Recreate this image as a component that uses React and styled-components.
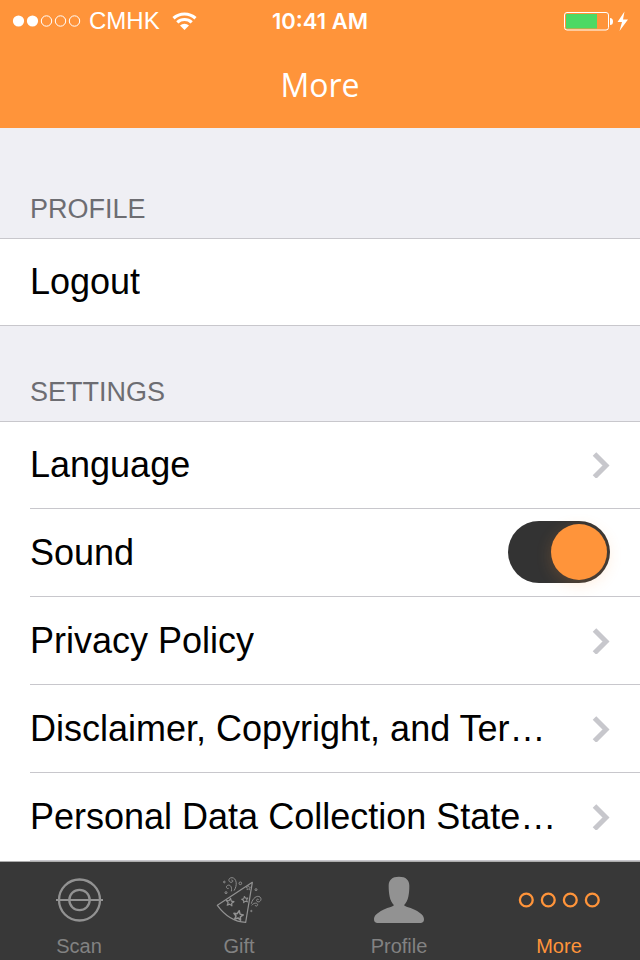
import { useState } from 'react';
import styled, { createGlobalStyle } from 'styled-components';

const GlobalStyle = createGlobalStyle`
    * {
        box-sizing: border-box;
    }

    body {
        margin: 0;
        background-color: #efeff4;
        font-family: 'Liberation Sans', Arial, sans-serif;
    }
`;

const Page = styled.div`
    display: flex;
    flex-direction: column;
    min-height: 100vh;
`;

const Header = styled.header`
    background-color: #ff943a;
    color: #fff;
`;

const StatusBar = styled.div`
    display: grid;
    grid-template-columns: 1fr auto 1fr;
    align-items: center;
    height: 41px;
    padding: 0 12px;
`;

const Carrier = styled.div`
    display: flex;
    align-items: center;
    gap: 8px;
    font-size: 24px;
`;

const CarrierName = styled.span`
    margin-right: 4px;
`;

const Clock = styled.time`
    font-family: Inter, 'Liberation Sans', sans-serif;
    font-size: 22px;
    font-weight: 600;
`;

const Battery = styled.div`
    display: flex;
    justify-content: flex-end;
`;

const Title = styled.h1`
    margin: 0;
    height: 87px;
    font-family: 'Open Sans', 'Noto Sans', sans-serif;
    font-size: 32px;
    font-weight: 400;
    line-height: 88px;
    text-align: center;
`;

const Main = styled.main`
    flex: 1;
`;

const SectionTitle = styled.h2`
    margin: 0;
    padding: ${({ $first }) => ($first ? '65px' : '50px')} 30px 13px;
    border-bottom: 1px solid #c8c7cc;
    color: #6d6d72;
    font-size: 27px;
    font-weight: 400;
    line-height: 32px;
`;

const List = styled.ul`
    margin: 0;
    padding: 0;
    list-style: none;
    background-color: #fff;
`;

const Item = styled.li`
    display: flex;
    height: 88px;
    padding-left: ${({ $full }) => ($full ? '0' : '30px')};

    &:first-child {
        height: 87px;
    }
`;

const Row = styled.div`
    display: flex;
    flex: 1;
    align-items: center;
    justify-content: space-between;
    min-width: 0;
    padding: 0 30px 0 ${({ $full }) => ($full ? '30px' : '0')};
    border: none;
    border-bottom: 1px solid #c8c7cc;
    background: transparent;
    color: #000;
    font-family: inherit;
    font-size: 36px;
    text-align: left;
    text-decoration: none;
    cursor: pointer;
`;

const RowText = styled.span`
    overflow: hidden;
    line-height: 44px;
    text-overflow: ellipsis;
    white-space: nowrap;
`;

const Switch = styled.input`
    flex: none;
    appearance: none;
    width: 102px;
    height: 62px;
    margin: 0 0 2px;
    padding: 3px;
    border-radius: 31px;
    background-color: #333;
    cursor: pointer;

    &::before {
        content: '';
        display: block;
        width: 56px;
        height: 56px;
        margin-left: ${({ checked }) => (checked ? 'auto' : '0')};
        border-radius: 50%;
        background-color: #ff943a;
        box-shadow: 0 4px 16px rgb(255 148 58 / 0.2);
    }
`;

const TabBar = styled.nav`
    display: grid;
    grid-template-columns: repeat(4, 1fr);
    height: 99px;
    border-top: 1px solid #acacac;
    background-color: #383838;
`;

const Tab = styled.a`
    display: flex;
    flex-direction: column;
    align-items: center;
    padding: 14px 2px 0 0;
    color: ${({ $active }) => ($active ? '#ff943a' : '#929292')};
    text-decoration: none;

    svg {
        flex: none;
        height: 48px;
    }
`;

const TabText = styled.span`
    margin-top: 10px;
    color: ${({ $active }) => ($active ? '#ff943a' : '#828282')};
    font-size: 20px;
    line-height: 24px;
`;

const SignalIcon = () => (
    <svg width="69" height="12" fill="none" stroke="#fff">
        <circle cx="6.5" cy="6" r="5.6" fill="#fff" stroke="none" />
        <circle cx="20.5" cy="6" r="5.6" fill="#fff" stroke="none" />
        <circle cx="34.5" cy="6" r="5.2" />
        <circle cx="48.5" cy="6" r="5.2" />
        <circle cx="62.5" cy="6" r="5.2" />
    </svg>
);

const WifiIcon = () => (
    <svg width="25" height="18" viewBox="0 0 25 18" fill="none">
        <g stroke="#fff" strokeWidth="3.2">
            <path d="M1.5 6.2a16.5 16.5 0 0 1 22 0" />
            <path d="M5.3 10.3a10.6 10.6 0 0 1 14.4 0" />
        </g>
        <path d="M8 13.5a6.6 6.6 0 0 1 9 0L12.5 18z" fill="#fff" />
    </svg>
);

const BatteryIcon = () => (
    <svg width="64" height="20" viewBox="0 0 64 20">
        <rect
            x="0.5"
            y="1.5"
            width="44"
            height="17.5"
            rx="2.5"
            fill="none"
            stroke="#fff"
        />
        <rect x="2" y="3" width="31" height="14.5" fill="#4cd964" />
        <path d="M46 7a3 3.5 0 0 1 0 7z" fill="#fff" />
        <path d="M60.5 0.5L53.5 11h4.5L55.5 20 64 8.5h-5z" fill="#fff" />
    </svg>
);

const ChevronIcon = () => (
    <svg width="18" height="26" viewBox="0 0 18 26" fill="none">
        <path d="M2.5 2L14 13.5 2.5 25" stroke="#c7c7cc" strokeWidth="5" />
    </svg>
);

const ScanIcon = () => (
    <svg width="48" viewBox="0 0 48 48" fill="none" stroke="currentColor">
        <circle cx="24.5" cy="24" r="20.5" strokeWidth="2.3" />
        <circle cx="24.5" cy="24" r="10.2" strokeWidth="2.3" />
        <path d="M1 24h47" strokeWidth="1.8" />
    </svg>
);

const STAR =
    'M0-10L2.9-3.6 9.5-3.1 4.4 1.6 5.9 8.1 0 4.6-5.9 8.1-4.4 1.6-9.5-3.1-2.9-3.6z';

const GiftIcon = () => (
    <svg
        width="48"
        viewBox="48 33 144 144"
        fill="none"
        stroke="currentColor"
        strokeWidth="3.6"
        strokeLinejoin="round"
    >
        <path d="M55 121L160 52 140 172Q91 170 55 121z" />
        <g strokeWidth="3">
            <path d={STAR} transform="translate(93 112) rotate(8) scale(1.2)" />
            <path d={STAR} transform="translate(138 104) rotate(-12)" />
            <path
                d={STAR}
                transform="translate(118 152) rotate(10) scale(1.5)"
            />
            <path d={STAR} transform="translate(148 69) scale(0.7)" />
        </g>
        <g strokeWidth="2.8">
            <path d="M105 77C116 61 113 39 99 38C87 38 87 51 96 52C103 52 103 44 97 45" />
            <path d="M97 79C100 65 93 58 86 61C79 64 83 73 89 70" />
            <path d="M157 116C161 99 174 90 183 96C191 104 181 115 174 109C170 104 176 100 179 104" />
            <path d="M158 121C165 112 176 113 176 119C175 125 168 124 169 120" />
            <circle cx="76" cy="51" r="2.5" />
            <circle cx="124" cy="55" r="4" />
            <circle cx="171" cy="74" r="3" />
            <circle cx="81" cy="83" r="3" />
            <circle cx="157" cy="138" r="2" />
        </g>
    </svg>
);

const ProfileIcon = () => (
    <svg width="50" viewBox="72 33 150 144" fill="currentColor">
        <path d="M147 35C168 35 178 45 178 62C178 76 177 85 175 95C173 106 168 114 162 121C167 126 185 129 197 136C213 145 222 152 222 163C222 171 218 174 211 174H83C76 174 72 171 72 163C72 152 81 145 97 136C109 129 127 126 132 121C126 114 121 106 119 95C117 85 116 76 116 62C116 45 126 35 147 35z" />
    </svg>
);

const MoreIcon = () => (
    <svg
        width="82"
        viewBox="0 0 82 48"
        fill="none"
        stroke="currentColor"
        strokeWidth="2.3"
    >
        <circle cx="8.3" cy="24" r="6.4" />
        <circle cx="30.3" cy="24" r="6.4" />
        <circle cx="52.3" cy="24" r="6.4" />
        <circle cx="74.3" cy="24" r="6.4" />
    </svg>
);

const pages = [
    'Privacy Policy',
    'Disclaimer, Copyright, and Ter…',
    'Personal Data Collection State…',
];

const tabs = [
    { name: 'Scan', Icon: ScanIcon },
    { name: 'Gift', Icon: GiftIcon },
    { name: 'Profile', Icon: ProfileIcon },
    { name: 'More', Icon: MoreIcon },
];

const LinkItem = ({ text }) => (
    <Item>
        <Row as="a" href="#">
            <RowText>{text}</RowText>
            <ChevronIcon />
        </Row>
    </Item>
);

const App = () => {
    const [sound, setSound] = useState(true);
    const activeTab = 'More';

    return (
        <>
            <GlobalStyle />
            <Page>
                <Header>
                    <StatusBar>
                        <Carrier>
                            <SignalIcon />
                            <CarrierName>CMHK</CarrierName>
                            <WifiIcon />
                        </Carrier>
                        <Clock>10:41 AM</Clock>
                        <Battery>
                            <BatteryIcon />
                        </Battery>
                    </StatusBar>
                    <Title>More</Title>
                </Header>
                <Main>
                    <SectionTitle $first>PROFILE</SectionTitle>
                    <List>
                        <Item $full>
                            <Row as="button" type="button" $full>
                                <RowText>Logout</RowText>
                            </Row>
                        </Item>
                    </List>
                    <SectionTitle>SETTINGS</SectionTitle>
                    <List>
                        <LinkItem text="Language" />
                        <Item>
                            <Row as="label" htmlFor="sound">
                                <RowText>Sound</RowText>
                                <Switch
                                    id="sound"
                                    type="checkbox"
                                    role="switch"
                                    checked={sound}
                                    onChange={(e) => setSound(e.target.checked)}
                                />
                            </Row>
                        </Item>
                        {pages.map((page) => (
                            <LinkItem key={page} text={page} />
                        ))}
                    </List>
                </Main>
                <TabBar>
                    {tabs.map(({ name, Icon }) => (
                        <Tab key={name} href="#" $active={name === activeTab}>
                            <Icon />
                            <TabText $active={name === activeTab}>
                                {name}
                            </TabText>
                        </Tab>
                    ))}
                </TabBar>
            </Page>
        </>
    );
};

export default App;
